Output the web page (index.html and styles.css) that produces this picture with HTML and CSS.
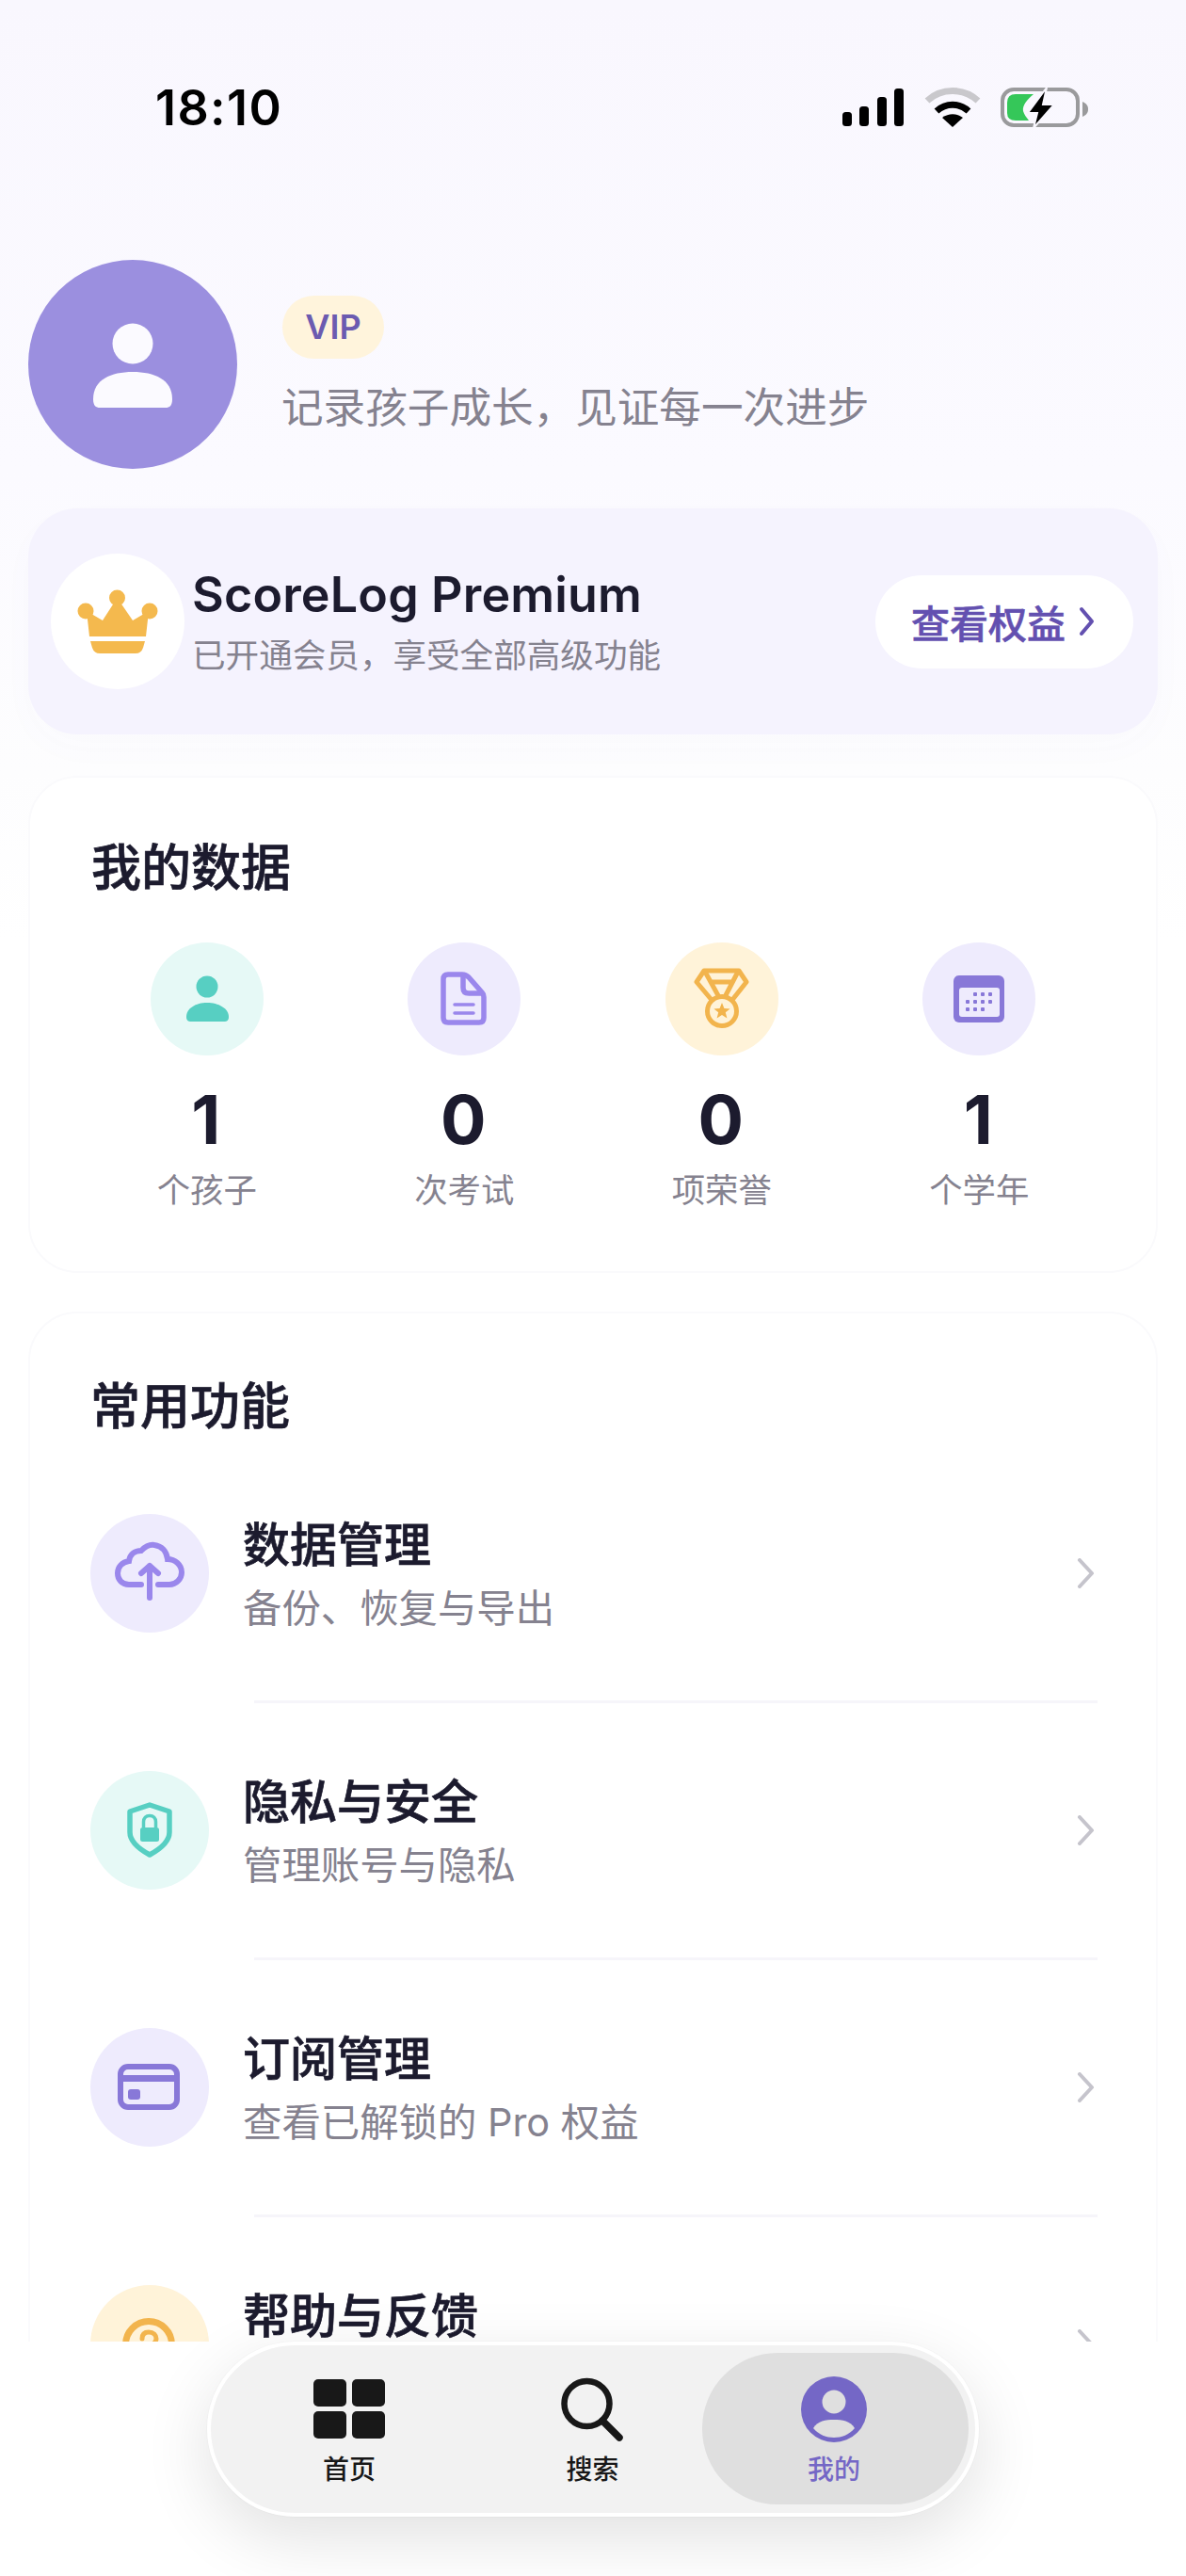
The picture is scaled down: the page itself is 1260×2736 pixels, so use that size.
FILE: index.html
```html
<!DOCTYPE html>
<html lang="zh-CN">
<head>
    <meta charset="UTF-8">
    <meta name="viewport" content="width=device-width, initial-scale=1.0">
    <title>ScoreLog - 我的</title>
    <link rel="stylesheet" href="styles.css">
</head>
<body>
    <div class="screen">
        <header class="status">
            <span class="status-time">18:10</span>
            <svg class="status-icons" width="262" height="46" viewBox="0 0 262 46">
                <!-- signal -->
                <rect x="1" y="27" width="10" height="15" rx="3.5" fill="#000"/>
                <rect x="19" y="21" width="10" height="21" rx="3.5" fill="#000"/>
                <rect x="38" y="11" width="10" height="31" rx="3.5" fill="#000"/>
                <rect x="56" y="2" width="10" height="40" rx="3.5" fill="#000"/>
                <!-- wifi -->
                <path d="M91 15 C106 1 130 1 145 15" fill="none" stroke="#c9c8cc" stroke-width="7"/>
                <path d="M101 26 C111 17 125 17 135 26" fill="none" stroke="#000" stroke-width="7"/>
                <path d="M118 43 L107 33 C114 28 122 28 129 33 Z" fill="#000"/>
                <!-- battery -->
                <rect x="171" y="3" width="80" height="38" rx="12" fill="none" stroke="#9a9a9c" stroke-width="4"/>
                <path d="M256 16 C260 18 262 20 262 24 C262 28 260 30 256 32 Z" fill="#9a9a9c"/>
                <path d="M176 17 Q176 8 185 8 H204 C197 14 192 20 193 26 C194 30 197 33 199 36 H185 Q176 36 176 28 Z" fill="#35c759"/>
                <path d="M218 1 L198 28 H208 L204 44 L226 19 H214 Z" fill="#000" stroke="#f9f7fe" stroke-width="2"/>
            </svg>
        </header>

        <section class="profile">
            <div class="avatar">
                <svg width="222" height="222" viewBox="0 0 222 222">
                    <circle cx="111" cy="89" r="21.5" fill="#fbfaff"/>
                    <path d="M69 148 C69 127 88 119 111 119 C134 119 153 127 153 148 C153 155 150 157 146 157 H76 C72 157 69 155 69 148 Z" fill="#fbfaff"/>
                </svg>
            </div>
            <div class="profile-text">
                <span class="vip-badge">VIP</span>
                <p class="profile-motto">记录孩子成长，见证每一次进步</p>
            </div>
        </section>

        <section class="premium">
            <div class="premium-crown">
                <svg width="142" height="144" viewBox="0 0 142 144">
                    <circle cx="70.5" cy="47" r="8.5" fill="#f4b94e"/>
                    <circle cx="37" cy="61" r="8.5" fill="#f4b94e"/>
                    <circle cx="105" cy="61" r="8.5" fill="#f4b94e"/>
                    <path d="M70.5 47 L87 71 L104 61 L101 88 H41 L38 61 L55 71 Z" fill="#f4b94e"/>
                    <path d="M42 93 H100 L98 100 Q96 106 90 106 H52 Q46 106 44 100 Z" fill="#f4b94e"/>
                </svg>
            </div>
            <div class="premium-text">
                <h2 class="premium-title">ScoreLog Premium</h2>
                <p class="premium-sub">已开通会员，享受全部高级功能</p>
            </div>
            <a class="premium-btn">
                查看权益
                <svg width="22" height="32" viewBox="0 0 22 32"><path d="M5 3 L16 16 L5 29" fill="none" stroke="#6350b0" stroke-width="4" stroke-linecap="round" stroke-linejoin="round"/></svg>
            </a>
        </section>

        <section class="card stats-card">
            <h2 class="card-title stats-title">我的数据</h2>
            <div class="stats">
                <div class="stat">
                    <div class="stat-icon bg-teal">
                        <svg width="120" height="120" viewBox="0 0 120 120">
                            <circle cx="60" cy="47" r="11.5" fill="#57cfc2"/>
                            <path d="M38 79 C38 70 48 64 60 64 C72 64 83 70 83 79 C83 83 81 84 78 84 H43 C40 84 38 83 38 79 Z" fill="#57cfc2"/>
                        </svg>
                    </div>
                    <div class="stat-num">1</div>
                    <div class="stat-label">个孩子</div>
                </div>
                <div class="stat">
                    <div class="stat-icon bg-purple">
                        <svg width="120" height="120" viewBox="0 0 120 120">
                            <path d="M43 34 H58 Q62 34 65 37 L79 53 Q81 55 81 58 V80 Q81 85 76 85 H43 Q38 85 38 80 V39 Q38 34 43 34 Z" fill="none" stroke="#9a87ec" stroke-width="5.5" stroke-linejoin="round"/>
                            <path d="M59 34 V48 Q59 54 65 54 H80" fill="none" stroke="#9a87ec" stroke-width="5.5"/>
                            <path d="M50 66 H70 M50 75 H70" stroke="#9a87ec" stroke-width="3.5" stroke-linecap="round"/>
                        </svg>
                    </div>
                    <div class="stat-num">0</div>
                    <div class="stat-label">次考试</div>
                </div>
                <div class="stat">
                    <div class="stat-icon bg-yellow">
                        <svg width="120" height="120" viewBox="0 0 120 120">
                            <g fill="none" stroke="#f2b44d" stroke-width="5" stroke-linejoin="round">
                                <path d="M49 61 L33 42 L41 30 H78 L86 42 L71 61"/>
                                <path d="M42 31 L58 60 M77 31 L62 60 M49 42 H71"/>
                                <circle cx="60" cy="73" r="15.5" fill="#fff3d9"/>
                            </g>
                            <path d="M60 64 L62.4 70 L68.6 70.4 L63.8 74.3 L65.4 80.4 L60 77 L54.6 80.4 L56.2 74.3 L51.4 70.4 L57.6 70 Z" fill="#f2b44d"/>
                        </svg>
                    </div>
                    <div class="stat-num">0</div>
                    <div class="stat-label">项荣誉</div>
                </div>
                <div class="stat">
                    <div class="stat-icon bg-purple">
                        <svg width="120" height="120" viewBox="0 0 120 120">
                            <rect x="33" y="35" width="54" height="50" rx="6" fill="#8878d8"/>
                            <rect x="39" y="48" width="43" height="31" rx="3" fill="#eeebfd"/>
                            <g fill="#8878d8">
                                <rect x="54" y="53" width="4" height="4" rx="1"/><rect x="62" y="53" width="4" height="4" rx="1"/><rect x="70" y="53" width="4" height="4" rx="1"/>
                                <rect x="46" y="61" width="4" height="4" rx="1"/><rect x="54" y="61" width="4" height="4" rx="1"/><rect x="62" y="61" width="4" height="4" rx="1"/><rect x="70" y="61" width="4" height="4" rx="1"/>
                                <rect x="46" y="69" width="4" height="4" rx="1"/><rect x="54" y="69" width="4" height="4" rx="1"/><rect x="62" y="69" width="4" height="4" rx="1"/>
                            </g>
                        </svg>
                    </div>
                    <div class="stat-num">1</div>
                    <div class="stat-label">个学年</div>
                </div>
            </div>
        </section>

        <section class="card menu-card">
            <h2 class="card-title">常用功能</h2>
            <div class="menu">
                <div class="menu-row">
                    <div class="menu-icon bg-purple">
                        <svg width="126" height="126" viewBox="0 0 126 126">
                            <path d="M54 75 H41 C33 75 29 69 29 63 C29 56 34 51 41 50 C42 43 47 39 54 39 C58 35 62 32 68 33 C76 34 81 40 82 48 C90 48 97 54 97 62 C97 69 91 75 84 75 H72" fill="none" stroke="#9a87ec" stroke-width="6" stroke-linecap="round"/>
                            <path d="M63 89 V55 M54 63 L63 55 L72 63" fill="none" stroke="#9a87ec" stroke-width="6" stroke-linecap="round" stroke-linejoin="round"/>
                        </svg>
                    </div>
                    <div class="menu-text">
                        <div class="menu-title">数据管理</div>
                        <div class="menu-sub">备份、恢复与导出</div>
                    </div>
                    <svg class="chevron" width="20" height="32" viewBox="0 0 20 32"><path d="M3 2 L16 16 L3 30" fill="none" stroke="#c5c4cc" stroke-width="4" stroke-linecap="round" stroke-linejoin="round"/></svg>
                </div>
                <div class="menu-sep"></div>
                <div class="menu-row">
                    <div class="menu-icon bg-teal">
                        <svg width="126" height="126" viewBox="0 0 126 126">
                            <path d="M63 36 L84 43 V65 C84 75 74 83 63 89 C52 83 42 75 42 65 V43 Z" fill="none" stroke="#57cfc2" stroke-width="5.5" stroke-linejoin="round"/>
                            <rect x="53" y="60" width="20" height="15" rx="2.5" fill="#57cfc2"/>
                            <path d="M56.5 60 V54 C56.5 50 59 47.5 63 47.5 C67 47.5 69.5 50 69.5 54 V60" fill="none" stroke="#57cfc2" stroke-width="3.5"/>
                        </svg>
                    </div>
                    <div class="menu-text">
                        <div class="menu-title">隐私与安全</div>
                        <div class="menu-sub">管理账号与隐私</div>
                    </div>
                    <svg class="chevron" width="20" height="32" viewBox="0 0 20 32"><path d="M3 2 L16 16 L3 30" fill="none" stroke="#c5c4cc" stroke-width="4" stroke-linecap="round" stroke-linejoin="round"/></svg>
                </div>
                <div class="menu-sep"></div>
                <div class="menu-row">
                    <div class="menu-icon bg-purple">
                        <svg width="126" height="126" viewBox="0 0 126 126">
                            <rect x="32" y="41" width="60" height="43" rx="8" fill="none" stroke="#8878d8" stroke-width="6"/>
                            <rect x="32" y="50" width="60" height="7" fill="#8878d8"/>
                            <rect x="40" y="65" width="13" height="11" rx="3" fill="#8878d8"/>
                        </svg>
                    </div>
                    <div class="menu-text">
                        <div class="menu-title">订阅管理</div>
                        <div class="menu-sub">查看已解锁的 Pro 权益</div>
                    </div>
                    <svg class="chevron" width="20" height="32" viewBox="0 0 20 32"><path d="M3 2 L16 16 L3 30" fill="none" stroke="#c5c4cc" stroke-width="4" stroke-linecap="round" stroke-linejoin="round"/></svg>
                </div>
                <div class="menu-sep"></div>
                <div class="menu-row">
                    <div class="menu-icon bg-yellow">
                        <svg width="126" height="126" viewBox="0 0 126 126">
                            <circle cx="62" cy="63" r="24.5" fill="none" stroke="#f2b44d" stroke-width="7"/>
                            <path d="M55 57 C55 52 58 50 62 50 C67 50 70 53 70 57 C70 63 62 63 62 69" fill="none" stroke="#f2b44d" stroke-width="5" stroke-linecap="round"/>
                        </svg>
                    </div>
                    <div class="menu-text">
                        <div class="menu-title">帮助与反馈</div>
                        <div class="menu-sub">常见问题与意见反馈</div>
                    </div>
                    <svg class="chevron" width="20" height="32" viewBox="0 0 20 32"><path d="M3 2 L16 16 L3 30" fill="none" stroke="#c5c4cc" stroke-width="4" stroke-linecap="round" stroke-linejoin="round"/></svg>
                </div>
            </div>
        </section>

        <footer class="tabbar">
            <nav class="tabs">
                <a class="tab tab-home">
                    <svg width="76" height="70" viewBox="0 0 76 70">
                        <rect x="0" y="3" width="35" height="29" rx="5" fill="#181818"/>
                        <rect x="41" y="3" width="35" height="29" rx="5" fill="#181818"/>
                        <rect x="0" y="37" width="35" height="29" rx="5" fill="#181818"/>
                        <rect x="41" y="37" width="35" height="29" rx="5" fill="#181818"/>
                    </svg>
                    <span>首页</span>
                </a>
                <a class="tab tab-search">
                    <svg width="70" height="70" viewBox="0 0 70 70">
                        <circle cx="28.5" cy="29" r="24" fill="none" stroke="#181818" stroke-width="6.5"/>
                        <path d="M45 47 L63 65" stroke="#181818" stroke-width="7.5" stroke-linecap="round"/>
                    </svg>
                    <span>搜索</span>
                </a>
                <a class="tab tab-active">
                    <svg width="70" height="70" viewBox="0 0 70 70">
                        <circle cx="35" cy="35" r="35" fill="#7467c6"/>
                        <circle cx="35" cy="27" r="12.5" fill="#dfdfdf"/>
                        <path d="M13 55 C18 47 26 46 35 46 C44 46 52 47 57 55 C51 62 43 65 35 65 C27 65 19 62 13 55 Z" fill="#dfdfdf"/>
                    </svg>
                    <span>我的</span>
                </a>
            </nav>
        </footer>
    </div>
</body>
</html>
```

FILE: styles.css
```css
html,
body {
    margin: 0;
    padding: 0;
}

body {
    font-family: Inter, "Noto Sans CJK SC", sans-serif;
    color: #1c1b2e;
}

h2,
p {
    margin: 0;
}

.screen {
    position: relative;
    width: 1260px;
    height: 2736px;
    overflow: hidden;
    background: linear-gradient(#f9f7fe 0, #fbfaff 500px, #fdfdfe 820px, #fff 1000px);
}

/* status bar */
.status {
    display: flex;
    justify-content: space-between;
    align-items: flex-start;
    height: 276px;
    box-sizing: border-box;
    padding: 92px 104px 0 165px;
}

.status-time {
    font-size: 52px;
    line-height: 46px;
    font-weight: 600;
    letter-spacing: 1.4px;
    color: #000;
}

/* profile head */
.profile {
    display: flex;
    align-items: center;
    gap: 47px;
    margin: 0 30px;
}

.avatar {
    width: 222px;
    height: 222px;
    border-radius: 50%;
    background: #9b8fdf;
}

.avatar svg,
.premium-crown svg,
.stat-icon svg,
.menu-icon svg {
    display: block;
}

.profile-text {
    display: flex;
    flex-direction: column;
    align-items: flex-start;
    gap: 27px;
    padding-bottom: 2px;
}

.vip-badge {
    width: 108px;
    height: 67px;
    margin-left: 1px;
    border-radius: 34px;
    background: #fff4dc;
    color: #6b5bb0;
    font-size: 36px;
    font-weight: 600;
    line-height: 67px;
    text-align: center;
}

.profile-motto {
    font-size: 44.6px;
    line-height: 50px;
    color: #85828f;
}

/* premium banner */
.premium {
    display: flex;
    align-items: center;
    height: 240px;
    margin: 42px 30px 0;
    padding: 0 26px 0 24px;
    box-sizing: border-box;
    border-radius: 52px;
    background: #f5f3fe;
    box-shadow: 0 14px 40px rgba(120, 100, 220, 0.02);
}

.premium-crown {
    width: 142px;
    height: 144px;
    border-radius: 50%;
    background: #fff;
}

.premium-text {
    margin-left: 8px;
}

.premium-title {
    font-size: 52px;
    line-height: 60px;
    font-weight: 600;
    letter-spacing: 0.15px;
}

.premium-sub {
    margin-top: 13px;
    font-size: 35.6px;
    line-height: 44px;
    color: #85828f;
}

.premium-btn {
    display: flex;
    align-items: center;
    justify-content: center;
    gap: 12px;
    width: 274px;
    height: 99px;
    margin-left: auto;
    border-radius: 50px;
    background: #fff;
    color: #6350b0;
    font-size: 41px;
    font-weight: 500;
    -webkit-text-stroke: 0.6px #6350b0;
}

/* white cards */
.card {
    margin: 0 30px;
    border: 2px solid #fafafc;
    border-radius: 52px;
    background: #fff;
    box-sizing: border-box;
}

.card-title {
    font-size: 53px;
    line-height: 60px;
    font-weight: 500;
    -webkit-text-stroke: 0.7px #1c1b2e;
}

.stats-card {
    height: 528px;
    margin-top: 44px;
    padding: 66px 51px 0;
}

.stats-title {
    margin-left: 14px;
}

.stats {
    display: grid;
    grid-template-columns: repeat(4, 1fr);
    margin-top: 49px;
}

.stat {
    display: flex;
    flex-direction: column;
    align-items: center;
}

.stat-icon {
    width: 120px;
    height: 120px;
    border-radius: 50%;
}

.bg-teal {
    background: #e6f9f6;
}

.bg-purple {
    background: #eeebfd;
}

.bg-yellow {
    background: #fff3d9;
}

.stat-num {
    margin-top: 28px;
    margin-right: 2px;
    font-size: 72px;
    line-height: 80px;
    font-weight: 700;
}

.stat-label {
    margin-top: 14px;
    font-size: 35.4px;
    line-height: 44px;
    color: #85828f;
}

.menu-card {
    height: 1400px;
    margin-top: 41px;
    padding: 69px 62px 0 64px;
}

.menu {
    margin-top: 12px;
}

.menu-row {
    display: flex;
    align-items: center;
    height: 270px;
}

.menu-icon {
    flex-shrink: 0;
    width: 126px;
    height: 126px;
    border-radius: 50%;
}

.menu-text {
    margin-left: 36px;
    padding-top: 5px;
}

.menu-title {
    font-size: 50px;
    line-height: 60px;
    font-weight: 500;
    -webkit-text-stroke: 0.7px #1c1b2e;
}

.menu-sub {
    margin-top: 9px;
    font-size: 41.4px;
    line-height: 56px;
    color: #85828f;
}

.chevron {
    margin-left: auto;
    margin-right: 2px;
}

.menu-sep {
    height: 3px;
    margin-left: 174px;
    background: #f6f5fa;
}

/* floating tab bar, lies over the scrolled list */
.tabbar {
    position: absolute;
    left: 0;
    top: 2487px;
    width: 1260px;
    height: 249px;
    background: #fff;
}

.tabs {
    display: flex;
    width: 820px;
    height: 186px;
    margin-left: 220px;
    padding: 8px 7px 9px 27px;
    box-sizing: border-box;
    border: 4px solid #fff;
    border-radius: 93px;
    background: #f2f2f2;
    box-shadow: 0 0 0 1px rgba(0, 0, 0, 0.015), 0 22px 70px rgba(0, 0, 0, 0.12);
}

.tab {
    display: flex;
    flex-direction: column;
    align-items: center;
    height: 161px;
    padding-top: 25px;
    box-sizing: border-box;
    font-size: 28px;
    line-height: 36px;
    font-weight: 500;
    color: #181818;
}

.tab span {
    margin-top: 11px;
}

.tab-home {
    width: 240px;
}

.tab-search {
    width: 233px;
    margin-left: 22px;
}

.tab-active {
    width: 283px;
    padding-right: 3px;
    border-radius: 80px;
    background: #dfdfdf;
    color: #7467c6;
}
```
